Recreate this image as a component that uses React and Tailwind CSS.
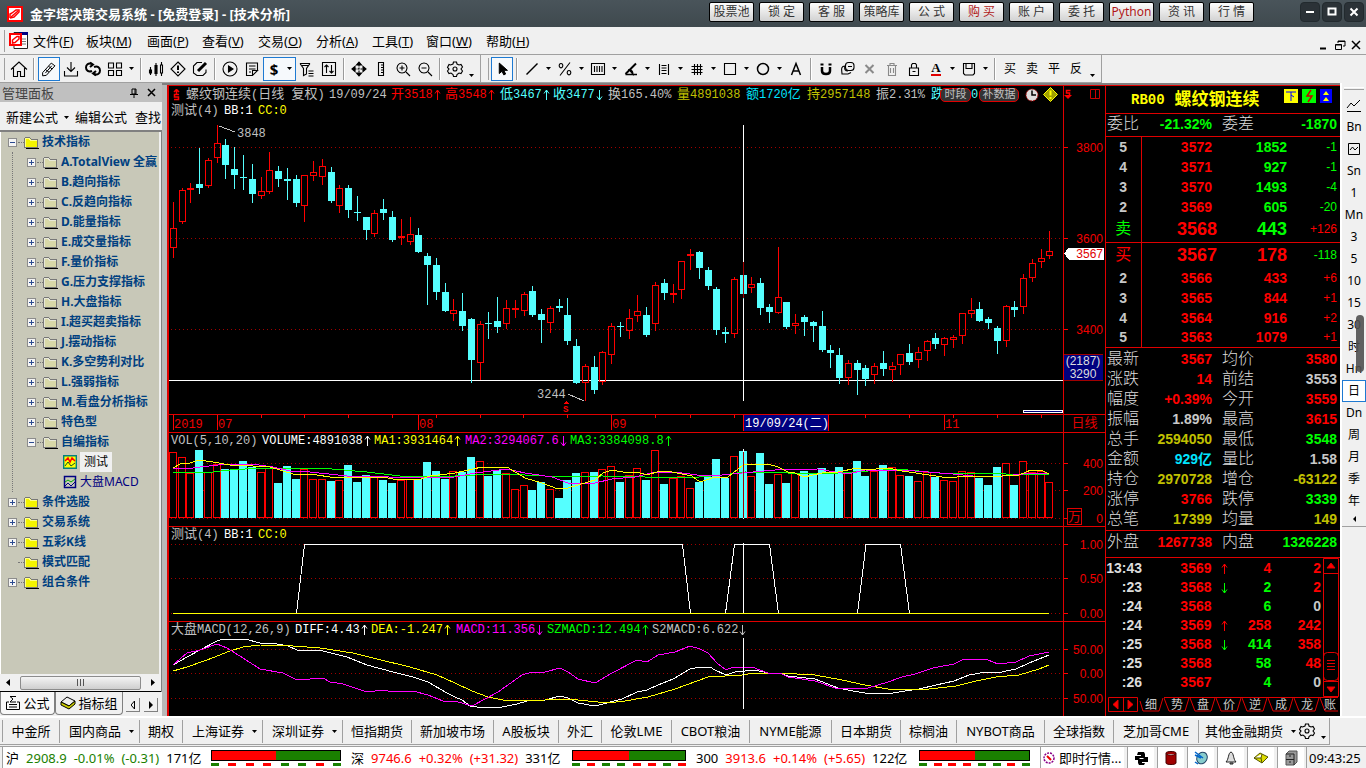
// ============================================================
// TRADING TERMINAL - K-LINE ANALYSIS SCREEN
// ============================================================

import React from 'react';

// ==================== CHART DATA ====================

// Each bar: up/down, high, body top, body bottom, low, volume top
const BARS = `
u 202 228 248 257 452|u 188 190 222 223 457|u 183 188 190 202 473|d 148 184 188 193 450|u 158 160 186 187 472
u 125 143 158 162 464|d 139 145 165 178 469|d 147 169 175 188 470|d 155 177 178 189 461|d 164 179 194 202 467
u 177 191 196 198 472|u 152 170 192 193 468|d 166 171 179 186 483|d 168 179 181 199 466|d 175 179 203 206 479
u 175 175 206 221 469|u 161 172 176 180 479|u 159 166 177 184 479|d 167 172 201 202 481|u 185 188 206 212 480
d 185 188 210 217 465|d 196 212 213 220 482|d 217 217 230 239 475|u 210 213 234 236 476|d 199 209 213 219 480
d 211 217 240 241 483|u 219 236 238 244 480|u 217 234 242 244 479|d 228 235 252 252 479|d 253 256 265 304 462
d 258 265 292 299 471|d 283 292 311 311 479|u 299 310 314 320 471|d 293 311 326 330 472|d 318 319 360 382 457
u 321 324 363 379 461|d 312 323 324 338 476|d 297 321 327 332 470|u 300 308 324 328 473|u 300 308 310 317 489
u 292 294 311 315 485|d 286 291 315 316 490|d 309 314 320 342 482|u 306 308 323 332 489|d 299 306 308 311 498
d 298 315 341 344 480|d 339 346 383 383 473|u 364 366 383 400 472|d 356 367 390 393 472|u 351 352 382 384 469
u 323 326 355 363 466|d 322 326 327 336 482|u 309 318 331 338 475|u 295 311 316 321 468|d 307 315 335 336 480
u 282 285 324 330 450|d 279 283 293 299 484|u 284 293 294 302 478|u 261 261 290 298 476|u 249 254 256 269 488
d 251 252 268 278 482|d 267 270 286 289 477|d 287 289 330 334 459|d 327 332 334 342 478|u 277 279 334 337 456
d 262 275 294 298 451|u 277 284 288 292 476|d 278 283 308 314 453|d 304 307 312 322 484|u 247 297 313 313 474
d 302 302 327 328 483|u 314 323 326 333 473|d 315 317 322 335 471|d 321 322 326 341 473|d 311 326 350 351 468
d 345 350 353 367 473|d 348 355 378 383 467|u 360 363 378 384 472|d 360 363 370 394 461|d 365 368 379 385 476
u 363 366 375 383 471|d 351 363 369 375 465|u 362 366 370 381 467|u 354 354 365 374 475|d 344 353 362 364 476
u 347 352 360 367 481|u 340 341 351 360 472|d 333 338 344 348 477|u 337 338 345 355 480|u 335 337 340 347 481
u 313 313 336 343 471|u 298 310 314 317 472|d 302 309 321 321 478|d 317 319 323 328 485|d 326 328 341 353 467
u 305 306 341 346 463|d 301 307 310 316 485|u 274 278 307 313 461|u 259 263 278 281 472|u 249 258 262 267 471
u 231 251 256 258 482`
  .trim()
  .split(/[|\n]/)
  .map((row, i) => {
    const [dir, ...n] = row.split(' ');
    const [high, top, bottom, low, vol] = n.map(Number);
    return { up: dir === 'u', high, top, bottom, low, vol, x: Math.floor(173.4 + 8.765 * i) };
  });

const MA_LINES = [
  { color: '#0f0', points: '173,472 213,472 230,470 260,468 320,468 367,472 400,476 455,476 495,474 525,475 565,477 602,476 688,478 722,475 745,472 788,473 838,473 898,469 939,473 973,473 1006,474 1049,474' },
  { color: '#f0f', points: '173,468 187,469 200,467 227,464 252,464 273,467 290,471 310,472 347,476 377,476 400,478 455,477 475,473 507,469 525,473 552,477 568,483 595,483 612,479 635,477 655,472 682,473 705,476 722,475 742,473 775,470 818,469 835,472 848,474 865,470 915,471 953,474 973,476 993,477 1033,473 1048,474' },
  { color: '#ff0', points: '173,468 182,463 190,463 199,460 213,462 230,465 253,466 267,466 283,471 293,474 317,475 330,477 383,477 393,479 418,480 430,476 447,474 455,473 482,467 507,467 525,478 542,483 558,489 568,488 578,485 595,480 603,473 612,470 628,473 637,472 647,475 660,471 672,472 692,476 700,482 715,477 728,477 743,465 768,464 778,467 788,472 795,473 804,477 822,473 838,472 857,468 865,470 888,468 902,471 929,475 949,478 966,476 986,477 1019,475 1031,470 1043,471 1049,474' },
];

const MACD_LINES = [
  { color: '#fff', points: '173,665 187,657 200,650 217,641 223,639 245,639 260,643 277,644 288,646 297,650 323,651 347,657 367,665 393,672 413,677 428,682 447,693 455,697 462,700 470,706 477,707 502,707 517,704 527,701 545,700 560,696 568,698 578,703 595,706 603,704 622,699 637,692 647,690 658,685 673,679 690,669 700,667 710,667 715,670 726,675 735,672 755,670 768,673 780,673 788,676 815,679 838,688 853,691 865,693 893,693 905,691 919,689 936,685 954,681 969,675 986,672 998,673 1006,671 1016,669 1029,663 1049,655' },
  { color: '#ff0', points: '173,671 187,667 207,660 230,651 243,647 260,645 293,646 320,648 353,653 377,659 410,667 437,675 455,683 472,691 488,697 508,701 545,700 562,699 578,700 608,703 625,701 648,697 675,689 708,677 742,675 755,673 778,673 815,675 842,680 865,685 888,689 912,690 929,689 956,686 976,681 996,677 1019,675 1039,669 1049,665' },
  { color: '#f0f', points: '173,665 187,653 200,650 217,644 227,648 243,658 260,669 283,673 297,680 323,678 330,682 343,684 367,692 383,690 393,692 413,691 428,695 443,701 455,701 472,706 485,699 498,692 522,675 532,672 545,672 560,668 568,672 578,679 595,683 612,673 637,660 647,662 658,655 675,652 690,646 700,649 708,653 717,663 726,670 733,667 752,667 768,673 780,673 788,677 815,681 838,689 868,688 888,682 902,677 915,674 933,668 954,664 964,659 974,659 988,660 998,664 1016,662 1029,656 1049,652' },
];

// ==================== SMALL HELPERS ====================

// Chart text: latin in 12px mono, Chinese runs one pixel larger
function Mix({ children, className = '' }) {
  const parts = String(children).split(/([\u4e00-\u9fff]+)/);
  return (
    <span className={`shrink-0 whitespace-pre ${className}`}>
      {parts.map((p, i) =>
        i % 2 ? <span key={i} className="text-[13px]">{p}</span> : p
      )}
    </span>
  );
}

function Arrow({ down }) {
  return (
    <svg className={`mx-px h-3 w-[7px] shrink-0 ${down ? 'rotate-180' : ''}`} viewBox="0 0 7 12" fill="none" stroke="currentColor">
      <path d="M3.500 1v10M1 4.500 3.500 1 6 4.500" />
    </svg>
  );
}

function Seg({ text, arrow, className }) {
  return (
    <span className={`flex shrink-0 items-center ${className}`}>
      <Mix>{text}</Mix>
      {arrow && <Arrow down={arrow === 'down'} />}
    </span>
  );
}

function GridLines({ rows }) {
  return rows.map((y) => (
    <line key={y} x1="171" x2="1063" y1={y + 0.5} y2={y + 0.5} stroke="#a00000" strokeDasharray="1 3" />
  ));
}

function Axis({ className, viewBox, ticks, children }) {
  return (
    <svg className={`block w-full overflow-visible ${className}`} viewBox={viewBox} preserveAspectRatio="none" shapeRendering="crispEdges">
      {ticks.map(([y, label]) => (
        <g key={y}>
          <path d={`M1064 ${y + 0.5}h4`} stroke="#f00" />
          <text x="1103" y={y + 5} textAnchor="end" fontSize="12" fill="#f00000">{label}</text>
        </g>
      ))}
      {children}
    </svg>
  );
}

// One chart pane: plot on the left, value axis on the right
function Pane({ plot, axis, className = '' }) {
  return (
    <div className={`flex ${className}`}>
      <div className="min-w-0 flex-1 overflow-hidden">{plot}</div>
      <div className="flex w-[42px] shrink-0 flex-col justify-end border-l border-[#e00000]">{axis}</div>
    </div>
  );
}

// ==================== TOOLBAR ICONS (22x22) ====================

const ICONS = {
  home: <path d="M3 11.500 11 4l8 7.500M5.500 10v8.500h4v-5h3v5h4V10" />,
  pen: <><path d="m4 15 9.500-10.500 4 3L8 18l-4 .5z" /><path d="m7 11.500 4 3M10.500 8l4 3M7 15.500l7-8" /></>,
  download: <path d="M11 4v9M7 9.500l4 4 4-4M4.500 13v5h13v-5" />,
  refresh: <g strokeWidth="2"><path d="M10 6c-4-1.500-6 1-6 3.500 0 3 2.500 5 6 3.500M12 16c4 1.500 6-1 6-3.500 0-3-2.500-5-6-3.500" /><path d="m8 4.500 3 2-3 2.500M14 13l-3 2.500 3 2" /></g>,
  grid: <path d="M4.500 5h5v5h-5zM12.500 5h5v5h-5zM4.500 12.500h5v5h-5zM12.500 12.500h5v5h-5z" />,
  candles: <><path d="M5.500 9v8M11 5v13M16.500 4v14" /><path d="M4.500 12h2v3h-2zM10 7.500h2v8h-2z" fill="currentColor" /><path d="M15.500 7h2v8h-2z" fill="#f0f0f0" /></>,
  warn: <><path d="m11 4 7 7-7 7-7-7z" /><path d="M11 7.500v4.500M11 13.500v1.500" strokeWidth="2" /></>,
  edit: <><path d="M13 4.500H8L4.500 8v7L8 17.500h6l3-3v-3" /><path d="m9 13 8-8" strokeWidth="3" /></>,
  play: <><circle cx="11" cy="11" r="7" /><path d="m9.500 8 4.500 3-4.500 3z" fill="currentColor" /></>,
  note: <path d="M16.500 12V5h-11v12.500h6l5-5h-5v5M8 8h6.500M8 11h6.500M8 14h2" />,
  filter: <path d="M4 5.500h10M4 5.500l3.500 5v7l3-1.500v-5.500L14 5.500M6 7.500h7M12.500 13h5M12.500 15.500h5M12.500 18h5" />,
  updown: <path d="M4.500 4.500h13v13h-13zM8.500 15V7M6.500 9l2-2 2 2M13.500 7v8M11.500 13l2 2 2-2" />,
  move: <><path d="M11 6.500v9M6.500 11h9" strokeDasharray="2 1" /><path d="m11 4 2.500 3h-5zM11 18l2.500-3h-5zM4 11l3-2.500v5zM18 11l-3-2.500v5z" fill="currentColor" /></>,
  ruler: <path d="M8.500 4.500h5v13h-5zM11 7h2.500M11 9.500h2.500M11 12h2.500M11 14.500h2.500" />,
  zoomIn: <path d="M10 5a5 5 0 1 0 .01 0M14 14l4 4M7.500 10h5M10 7.500v5" />,
  zoomOut: <path d="M10 5a5 5 0 1 0 .01 0M14 14l4 4M7.500 10h5" />,
  gear: <><path d="m9.500 4-.5 2-2.500 1-1.500-.5-1.500 3 1.500 1.500-1.500 2L5 15.500l2-.5 2 1.500.5 2h3l.5-2 2-1.500 2 .5 1.500-2.500-1.500-2L18.500 9 17 6.500l-2 .5-2-1-.5-2z" /><circle cx="11" cy="11" r="2" /></>,
  pointer: <path d="M8 4.500v11.500l3-2.500 2 4 2-1-2-4h4z" fill="currentColor" />,
  line: <path d="m5.500 16.500 11-11" strokeWidth="1.500" />,
  percent: <path d="M16 4.500 6 17.500M7 5.500a1.800 2.200 0 1 0 .01 0M15 12.500a1.800 2.200 0 1 0 .01 0" />,
  bars: <path d="M4.500 5.500h13v11h-13zM7.500 8v6M10 8v6M12.500 8v6M15 8v6" />,
  angle: <><path d="M5.500 16 16 5.500" strokeWidth="2" /><path d="M5.500 16.500H17" strokeWidth="1.500" /><path d="M9 11.500c3 0 4 2 4 5z" fill="currentColor" /></>,
  levels: <path d="M6.500 6v11M15.500 6v11M8.500 7.500h5M8.500 10h5M8.500 12.500h5M8.500 15.500h5" />,
  hash: <path d="M5.500 8.500h11M5.500 11.500h11M5.500 14.500h11M8.500 6v11M11.500 6v11M14.500 6v11" />,
  rect: <path d="M5.500 5.500h11v11h-11z" />,
  circle: <circle cx="11" cy="11" r="5.500" strokeWidth="1.500" />,
  letter: <path d="m6.500 17 4.500-11.500L15.500 17M8 13h6" strokeWidth="1.500" />,
  magnet: <><path d="M7 9v4c0 4 8 4 8 0V9" strokeWidth="2.500" /><path d="M5.500 6.500h3M13.500 6.500h3" strokeWidth="2" /></>,
  stack: <><rect x="8.500" y="4.500" width="8.500" height="8" rx="3" /><path d="M11 8.500h4M8 8c-5 0-3 5-3 8h6l3-1.500M8 8c-1 3 0 5 3 5" /></>,
  cross: <path d="m6.500 7 8 8M14.500 7l-8 8" stroke="#8a8a8a" strokeWidth="2" />,
  trash: <path d="M6 7.500h10M9 7V5.500h4V7M7.500 8v9.500h7V8M9.500 10v5M12.500 10v5" stroke="#8a8a8a" />,
  lock: <path d="M6.500 10h9v7.500h-9zM8.500 10V7l1-1.500h3l1 1.500v3M9.500 13.500h3" />,
  disk: <path d="M5.500 5.500h11v10l-1.500 1.500H7l-1.500-1.500zM8 5.500v5h6v-5M8.500 17h6" />,
};

function Icon({ name }) {
  return (
    <svg className="size-[22px]" viewBox="0 0 22 22" fill="none" stroke="currentColor" strokeWidth="1.100">
      {ICONS[name]}
    </svg>
  );
}

function Caret() {
  return (
    <svg className="h-[3px] w-[5px]" viewBox="0 0 5 3"><path d="M0 0h5L2.500 3z" fill="currentColor" /></svg>
  );
}

function Tool({ name, label, active, children }) {
  return (
    <button
      aria-label={label || name}
      className={`flex h-6 w-[22px] shrink-0 items-center justify-center ${active ? 'border border-[#1e7ad2] bg-[#f6f9fc]' : ''}`}
    >
      {name ? <Icon name={name} /> : children}
    </button>
  );
}

function Drop({ low }) {
  return (
    <button aria-label="更多" className={`flex h-6 w-[11px] shrink-0 justify-center ${low ? 'items-end pb-1' : 'items-center'}`}>
      <Caret />
    </button>
  );
}

const Sep = () => <div className="mx-[3px] h-[22px] w-0.5 shrink-0 border-l border-[#9a9a9a] border-r border-r-white" />;
const Grip = () => <div className="mx-[2px] h-[22px] w-[3px] shrink-0 border-r border-[#a0a0a0]" />;

// ==================== TOP BARS ====================

const QUICK = ['股票池', '锁 定', '客 服', '策略库', '公 式', '购 买', '账 户', '委 托', 'Python', '资 讯', '行 情'];
const WINDOW_CONTROLS = [
  ['最小化', 'M6 10h8'],
  ['最大化', 'M6.500 6.500h7v6h-7z'],
  ['关闭', 'm6.500 6.500 7 7M13.500 6.500l-7 7'],
];

function TitleBar() {
  return (
    <header className="flex h-[27px] items-center bg-linear-to-b from-[#49545a] to-[#3f494e] pr-0.5 pl-[7px] text-white">
      <svg className="size-4" viewBox="0 0 16 16">
        <rect width="16" height="16" fill="#f00" />
        <rect x="2" y="2" width="12" height="12" fill="#fff" />
        <path d="M3 12V8l2-1M3 12l4-1 5-5V4h-3L5 7" fill="none" stroke="#f00" strokeWidth="1.500" />
        <path d="m4 11 7-6" stroke="#f00" strokeWidth="1.500" />
      </svg>
      <h1 className="ml-[7px] text-[13px] font-bold leading-5">金字塔决策交易系统 - [免费登录] - [技术分析]</h1>
      <div className="ml-auto flex gap-[5px] pb-[3px] text-[#333]">
        {QUICK.map((t) => (
          <button
            key={t}
            className={`h-5 w-[45px] rounded-[2px] border border-black bg-linear-to-b from-[#fdfdfd] to-[#d2d2d2] text-[12px] leading-4 ${
              t === '购 买' || t === 'Python' ? 'text-[#b01818]' : ''
            }`}
          >
            {t}
          </button>
        ))}
      </div>
      <div className="ml-[46px] flex gap-0.5 pb-1">
        {WINDOW_CONTROLS.map(([label, d]) => (
          <button key={label} aria-label={label} className="size-5 rounded-[4px] border border-[#222a2e] bg-[#2b3237]">
            <svg className="size-[18px]" viewBox="1 1 18 18" fill="none" stroke="#fff" strokeWidth="2"><path d={d} /></svg>
          </button>
        ))}
      </div>
    </header>
  );
}

const MENUS = [
  ['文件', 'F', 'w-[53px]'], ['板块', 'M', 'w-[61px]'], ['画面', 'P', 'w-[55px]'], ['查看', 'V', 'w-14'],
  ['交易', 'O', 'w-[58px]'], ['分析', 'A', 'w-14'], ['工具', 'T', 'w-[54px]'], ['窗口', 'W', 'w-[60px]'], ['帮助', 'H', 'w-14'],
];

function MenuBar() {
  return (
    <nav className="flex h-[27px] items-center text-[13px]">
      <Grip />
      <svg className="mr-[5px] ml-0.5 h-[18px] w-[19px]" viewBox="0 0 19 18">
        <path d="M5 .5h13.500v16H5z" fill="#fff" stroke="#222" />
        <path d="M10 0h9v3h-9z" fill="#000080" />
        <path d="M13 7h4M13 9.500h4M13 12h4" stroke="#777" />
        <path d="M1 2h11v11H1z" fill="#fff" stroke="#f00" strokeWidth="2" />
        <path d="M3.500 11V8L8 4.500h2V7L6 10.500z" fill="none" stroke="#f00" strokeWidth="1.500" />
      </svg>
      {MENUS.map(([t, k, w]) => (
        <button key={k} className={`shrink-0 text-left whitespace-nowrap ${w}`}>
          {t}(<u>{k}</u>)
        </button>
      ))}
      <div className="mt-2 ml-auto flex gap-1 pr-1">
        <button aria-label="最小化子窗口"><svg className="size-3" viewBox="0 0 12 12"><path d="M2 8.500h6v2H2z" /></svg></button>
        <button aria-label="还原子窗口"><svg className="size-3" viewBox="0 0 12 12" fill="none" stroke="#000"><path d="M4 4V2h7v5H9M1.500 5.500h6v5h-6zM4 2.500h7M1.500 6h6" /></svg></button>
        <button aria-label="关闭子窗口"><svg className="size-3" viewBox="0 0 12 12" stroke="#000" strokeWidth="1.500"><path d="m2 2 8 8M10 2l-8 8" /></svg></button>
      </div>
    </nav>
  );
}

const DRAWING = ['line', 'percent', 'bars', 'angle', 'levels', 'hash', 'rect', 'circle'];

function ToolBar() {
  return (
    <div className="flex h-[29px] border-t border-[#a0a0a0]">
      <div className="flex items-center border-r border-b border-[#a0a0a0] pr-[3px]">
        <Grip />
        <div className="w-px" />
        <Tool name="home" label="首页" />
        <Sep />
        <Tool name="pen" active />
        <Tool name="download" /><Tool name="refresh" /><Tool name="grid" /><Drop />
        <Sep />
        <Tool name="candles" /><Tool name="warn" /><Tool name="edit" />
        <Sep />
        <Tool name="play" /><Tool name="note" />
        <div className="flex h-6 w-[33px] shrink-0 items-center border border-[#1e7ad2] bg-[#f6f9fc]">
          <button className="w-[21px] text-[15px] font-bold leading-5">$</button>
          <Drop />
        </div>
        <Tool name="filter" /><Tool name="updown" />
        <Sep />
        <Tool name="move" /><Tool name="ruler" /><Tool name="zoomIn" /><Tool name="zoomOut" />
        <Sep />
        <Tool name="gear" /><Drop low />
      </div>
      <div className="flex items-center border-r border-b border-[#a0a0a0] pl-[3px] pr-[3px]">
        <Grip />
        <Tool name="pointer" active />
        <Sep />
        {DRAWING.map((n) => (
          <React.Fragment key={n}><Tool name={n} /><Drop /></React.Fragment>
        ))}
        <Tool name="letter" />
        <Sep />
        <Tool name="magnet" /><Tool name="stack" /><Tool name="cross" /><Tool name="trash" /><Tool name="lock" />
        <Tool label="文字颜色">
          <span className="border-b-2 border-[#e00000] font-['Liberation_Serif',serif] text-[13px] font-bold leading-3">A</span>
        </Tool>
        <Drop />
        <Tool name="disk" /><Drop />
        <Sep />
        {['买', '卖', '平', '反'].map((t) => (
          <Tool key={t} label={t}><span className="text-[12px]">{t}</span></Tool>
        ))}
        <Drop low />
      </div>
    </div>
  );
}

// ==================== LEFT PANEL ====================

const INDICATORS = [
  'A.TotalView 全赢', 'B.趋向指标', 'C.反趋向指标', 'D.能量指标', 'E.成交量指标', 'F.量价指标', 'G.压力支撑指标',
  'H.大盘指标', 'I.超买超卖指标', 'J.摆动指标', 'K.多空势利对比', 'L.强弱指标', 'M.看盘分析指标', '特色型',
];

function Folder({ root }) {
  return (
    <svg className="h-[13px] w-[15px] shrink-0" viewBox="0 0 15 13" shapeRendering="crispEdges">
      <path d="M2 12.500h13V4" fill="none" stroke="#000" />
      <path d="M.5 11.500v-9l1-1h4l1 2h7v8z" fill={root ? '#f4f400' : '#d8d8a8'} stroke="#777" />
      <path d="M1.500 10.500v-8h4l1 2h6" fill="none" stroke={root ? '#ff8' : '#e8e8d8'} />
    </svg>
  );
}

function Expander({ sign }) {
  return (
    <span className="flex w-[26px] shrink-0 items-center">
      {sign ? (
        <svg className="size-[9px]" viewBox="0 0 9 9" shapeRendering="crispEdges">
          <rect x=".5" y=".5" width="8" height="8" fill="#f4f4f4" stroke="#8c8c8c" />
          <path d={sign === '+' ? 'M2 4.500h5M4.500 2v5' : 'M2 4.500h5'} stroke="#2a4a90" />
        </svg>
      ) : (
        <span className="w-[9px]" />
      )}
      <span className="ml-px w-1.5 border-t border-dotted border-[#777]" />
    </span>
  );
}

function Branch({ label, sign = '+', root }) {
  return (
    <div className={`flex h-5 items-center ${root ? 'pl-[7px]' : 'pl-[26px]'}`}>
      <Expander sign={sign} />
      <span className="-ml-[10px] flex items-center gap-[3px]">
        <Folder root={root} />
        <span className="whitespace-nowrap text-[12px] font-bold text-[#004080]">{label}</span>
      </span>
    </div>
  );
}

function ManagePanel() {
  return (
    <aside className="flex w-[162px] shrink-0 flex-col">
      <div className="flex h-[19px] items-center bg-[#c0c0c0] px-0.5 text-[13px] text-[#444]">
        <h2>管理面板</h2>
        <button aria-label="固定" className="ml-auto mr-2">
          <svg className="size-[10px]" viewBox="0 0 10 10" fill="none" stroke="#000"><path d="M3 1h4v5H3zM1 6.500h8M5 7v3M6 1v5" /></svg>
        </button>
        <button aria-label="关闭面板" className="mr-1">
          <svg className="size-[9px]" viewBox="0 0 9 9" stroke="#000" strokeWidth="1.500"><path d="m1 1 7 7M8 1 1 8" /></svg>
        </button>
      </div>
      <div className="flex h-[28px] items-center gap-1 whitespace-nowrap pl-1.5 pt-0.5 text-[13px]">
        <button className="flex shrink-0 items-center">新建公式<span className="ml-1.5"><Caret /></span></button>
        <button className="ml-0.5 shrink-0">编辑公式</button>
        <button className="ml-1 shrink-0">查找</button>
      </div>
      <div className="flex flex-1 flex-col border-t-2 border-r border-[#808080]">
        <div className="mr-0.5 flex-1 overflow-hidden border-l border-white bg-[#c8c8b8]">
          <Branch root label="技术指标" sign="-" />
          <div className="ml-[11px] border-l border-dotted border-[#777]">
            <div className="-ml-3">
              {INDICATORS.map((t) => <Branch key={t} label={t} />)}
              <Branch label="自编指标" sign="-" />
              <div className="flex h-5 items-center pl-[62px]">
                <svg className="size-[14px] shrink-0" viewBox="0 0 14 14">
                  <path d="M.7.7h12.600v12.600H.7z" fill="#ff0" stroke="#008080" strokeWidth="1.400" />
                  <path d="m2 6 3-3 2 4 2-4 3 3" fill="none" stroke="#f00" strokeWidth="1.500" />
                  <path d="m2 11 3-4 3 4 4-3" fill="none" stroke="#0a5a20" />
                </svg>
                <button className="ml-[3px] h-5 w-8 bg-[#f0f0f0] text-[12px]">测试</button>
              </div>
              <div className="flex h-5 items-center pl-[62px]">
                <svg className="size-[14px] shrink-0" viewBox="0 0 14 14" fill="none">
                  <path d="M1.500 1.500h11v11h-11z" stroke="#000080" strokeWidth="1.500" />
                  <path d="m2 7 3-2 3 2 4-3" stroke="#0a0" />
                  <path d="m2 11 3-3 3 3 4-4" stroke="#000080" />
                </svg>
                <button className="ml-[3px] whitespace-nowrap text-[12px] text-[#000080]">大盘MACD</button>
              </div>
            </div>
          </div>
          <Branch root label="条件选股" />
          <Branch root label="交易系统" />
          <Branch root label="五彩K线" />
          <Branch root label="模式匹配" sign="" />
          <Branch root label="组合条件" />
        </div>
        <div className="flex h-[18px] items-center justify-between border-b border-black px-1.5">
          <svg className="h-[7px] w-1" viewBox="0 0 4 7"><path d="M4 0v7L0 3.500z" /></svg>
          <div className="flex h-[14px] w-[121px] items-center justify-center gap-0.5 rounded-[2px] border border-[#8c8c8c] bg-linear-to-b from-[#f4f4f4] to-[#cfcfcf]">
            <i className="h-[7px] w-px bg-[#555]" /><i className="h-[7px] w-px bg-[#555]" /><i className="h-[7px] w-px bg-[#555]" />
          </div>
          <svg className="h-[7px] w-1" viewBox="0 0 4 7"><path d="M0 0v7l4-3.500z" /></svg>
        </div>
      </div>
      <div className="flex h-6 text-[13px]">
        <button className="flex h-[23px] w-[55px] items-center justify-center gap-0.5 rounded-b-[4px] border border-t-0 border-[#808080] bg-[#f8f8f8]">
          <svg className="h-[14px] w-4 shrink-0" viewBox="0 0 16 14" fill="none" stroke="#000"><path d="M4 6H1.500v7.500h13V6H12M4 8.500h8M4 11h8M5 .5h6M5 .5 8 3 5 6h6" /></svg>公式
        </button>
        <button className="flex h-[23px] w-[68px] items-center justify-center gap-0.5 whitespace-nowrap rounded-b-[4px] border border-t-0 border-[#808080]">
          <svg className="h-[14px] w-4 shrink-0" viewBox="0 0 16 14" stroke="#000"><path d="m1 6 6-5 8 4-6 5z" fill="#eee" /><path d="m1 6 8 4 6-5v3l-6 5-8-4z" fill="#cc0" /></svg>指标组
        </button>
        <div className="ml-[3px] mt-1.5 flex gap-1">
          <button aria-label="上一组" className="flex size-[14px] items-center justify-center border-r border-b border-[#808080]"><svg className="h-2 w-1" viewBox="0 0 4 8"><path d="M3.500 0v8L0 4z" fill="none" stroke="#000" /></svg></button>
          <button aria-label="下一组" className="flex size-[14px] items-center justify-center border-r border-b border-[#808080]"><svg className="h-2 w-1" viewBox="0 0 4 8"><path d="M0 0v8l4-4z" /></svg></button>
        </div>
      </div>
    </aside>
  );
}

// ==================== CHART AREA ====================

function PricePlot() {
  return (
    <svg className="block h-[295px] w-full" viewBox="169 119 894 295" preserveAspectRatio="none" shapeRendering="crispEdges">
      <GridLines rows={[147, 238, 329]} />
      <path d="M169 380.500H1063M743.500 125V401" stroke="#fff" />
      {BARS.map((b, i) =>
        b.up ? (
          <g key={i} stroke="#f00" fill="none">
            <path d={`M${b.x + 0.5} ${b.high}V${b.top}M${b.x + 0.5} ${b.bottom}V${b.low + 1}`} />
            <rect x={b.x - 2.5} y={b.top + 0.5} width="6" height={Math.max(b.bottom - b.top - 1, 1)} />
          </g>
        ) : (
          <g key={i} fill="#5ff">
            <rect x={b.x} y={b.high} width="1" height={b.low - b.high + 1} />
            <rect x={b.x - 3} y={b.top} width="7" height={b.bottom - b.top} />
          </g>
        )
      )}
      <path d="M743.500 262v36" stroke="#a00000" />
      <g stroke="#c0c0c0" fill="#c0c0c0">
        <path d="m219 126 16 6M568 394l16 7" />
        <g stroke="none" fontSize="12">
          <text x="237" y="137">3848</text>
          <text x="537" y="398">3244</text>
        </g>
      </g>
      <g fill="#f00">
        <path d="M564 404h5l-2.500-3z" />
        <text x="563" y="412" fontSize="9" fontWeight="bold">S</text>
      </g>
      <path d="M1023.500 410.500h39v2h-39z" fill="#000080" stroke="#fff" />
    </svg>
  );
}

function ChartArea() {
  return (
    <section className="min-w-0 flex-1 border-t border-l-2 border-[#e00000] bg-black font-['Liberation_Mono','Noto_Sans_CJK_SC',monospace] text-[12px] text-[#c0c0c0]">
      {/* ===== K-line ===== */}
      <Pane
        plot={
          <>
            <div className="flex h-[17px] items-center pl-1">
              <svg className="mr-1.5 h-3 w-[7px] shrink-0" viewBox="0 0 7 12" fill="none" stroke="#f00" strokeWidth="1.500"><path d="M6 5.500H1.500V8h4v2.500H1M3.500 1v4M1 3 3.500.5 6 3" /></svg>
              <Seg text="螺纹钢连续(日线 复权)" className="w-[143px]" />
              <Seg text="19/09/24" className="w-[62px]" />
              <Seg text="开3518" arrow="up" className="w-[54px] text-[#f00]" />
              <Seg text="高3548" arrow="up" className="w-[55px] text-[#f00]" />
              <Seg text="低3467" arrow="up" className="w-[53px] text-[#5ff]" />
              <Seg text="收3477" arrow="down" className="w-[55px] text-[#5ff]" />
              <Seg text="换165.40%" className="w-[69px]" />
              <Seg text="量4891038" className="w-[69px] text-[#c0c000]" />
              <Seg text="额1720亿" className="w-[61px] text-[#00e5ff]" />
              <Seg text="持2957148" className="w-[69px] text-[#c0c000]" />
              <Seg text="振2.31%" className="w-[55px]" />
              <Seg text="跌" className="w-[9px] text-[#5ff]" />
              <button className="z-10 h-[14px] w-[31px] shrink-0 rounded-[5px] border border-[#e00000] bg-[#333] text-[11px] leading-3">时段</button>
              <span className="w-2 shrink-0 text-[#5ff]">0</span>
              <button className="h-[14px] w-10 shrink-0 rounded-[5px] border border-[#e00000] bg-[#333] text-[11px] leading-3">补数据</button>
              <svg className="ml-1.5 size-[14px] shrink-0" viewBox="0 0 14 14"><circle cx="7" cy="7" r="6" fill="#ddd" stroke="#a00" strokeDasharray="2 1" /><path d="M7 2.500V7h4" fill="none" stroke="#000" strokeWidth="1.500" /></svg>
              <svg className="ml-1 size-[15px] shrink-0" viewBox="0 0 15 15"><path d="m7.500.5 7 7-7 7-7-7z" fill="#a0a000" stroke="#ff0" /><path d="M7.500 3.500v5M7.500 10v2" stroke="#ff0" strokeWidth="2" /></svg>
            </div>
            <div className="flex h-4 items-center pl-0.5">
              <Seg text="测试(4)" className="w-[53px]" />
              <Seg text="BB:1" className="w-[34px] text-white" />
              <Seg text="CC:0" className="text-[#ff0]" />
            </div>
            <PricePlot />
          </>
        }
        axis={
          <>
            <div className="mb-auto flex justify-between pt-[3px] pr-[5px]">
              <svg className="h-[10px] w-2" viewBox="0 0 8 10"><path d="M4 10 0 6h8z" fill="#f00" /><path d="M6.500 1.500h-4V4h3v3" fill="none" stroke="#f00" strokeWidth="1.500" /></svg>
              <svg className="h-[10px] w-[10px]" viewBox="0 0 10 10" fill="none" stroke="#c00"><path d="M.5.5h9v9h-9zM5.500 0v10" /></svg>
            </div>
            <Axis className="h-[295px] font-['Liberation_Sans',sans-serif]" viewBox="1064 119 41 295" ticks={[[147, '3800'], [238, '3600'], [329, '3400']]}>
              <path d="m1064 253.500 5-6h35v12h-35z" fill="#fff" />
              <text x="1103" y="258" textAnchor="end" fontSize="12" fill="#e00000">3567</text>
              <path d="M1064 354h39v27h-39z" fill="#000080" />
              <path d="M1064 354.500h39M1064 380.500h39" stroke="#a00000" />
              <text x="1083" y="365" textAnchor="middle" fontSize="12" fill="#ddd">(2187)</text>
              <text x="1083" y="378" textAnchor="middle" fontSize="12" fill="#ddd">3290</text>
            </Axis>
          </>
        }
      />
      {/* ===== Date axis ===== */}
      <Pane
        className="border-t border-[#e00000]"
        plot={
          <svg className="block h-[17px] w-full" viewBox="169 415 894 17" preserveAspectRatio="none" shapeRendering="crispEdges" fontSize="12" fill="#f00000">
            <path d="M173.500 415v15M217.500 415v15M418.500 415v15M611.500 415v15M944.500 415v15" stroke="#f00" />
            <path d="M261.500 415v3M304.500 415v3M348.500 415v3M392.500 415v3M436.500 415v3M480.500 415v3M523.500 415v3M567.500 415v3M655.500 415v3M690.500 415v3M734.500 415v3M865.500 415v3M909.500 415v3M953.500 415v3M997.500 415v3M1041.500 415v3" stroke="#f00" />
            <text x="174" y="428">2019</text>
            <text x="218" y="428">07</text>
            <text x="419" y="428">08</text>
            <text x="612" y="428">09</text>
            <text x="945" y="428">11</text>
            <path d="M743 415h85v16h-85z" fill="#000080" />
            <path d="M743.500 415v16M828.500 415v16" stroke="#f00" />
            <text x="745" y="427" fill="#fff">19/09/24(二)</text>
          </svg>
        }
        axis={<span className="text-center text-[13px] leading-[17px] text-[#e00000]">日线</span>}
      />
      {/* ===== Volume ===== */}
      <Pane
        className="border-t border-[#e00000]"
        plot={
          <>
            <div className="flex h-4 items-center pl-0.5">
              <Seg text="VOL(5,10,20)" className="w-[91px]" />
              <Seg text="VOLUME:4891038" arrow="up" className="w-28 text-white" />
              <Seg text="MA1:3931464" arrow="up" className="w-[91px] text-[#ff0]" />
              <Seg text="MA2:3294067.6" arrow="down" className="w-[105px] text-[#f0f]" />
              <Seg text="MA3:3384098.8" arrow="up" className="text-[#0f0]" />
            </div>
            <svg className="block h-[77px] w-full" viewBox="169 449 894 77" preserveAspectRatio="none" shapeRendering="crispEdges">
              <GridLines rows={[463, 490, 518]} />
              {BARS.map((b, i) =>
                b.up ? (
                  <rect key={i} x={b.x - 3.5} y={b.vol + 0.5} width="7" height={517 - b.vol} fill="#000" stroke="#f00" />
                ) : (
                  <rect key={i} x={b.x - 4} y={b.vol} width="8" height={518 - b.vol} fill="#5ff" />
                )
              )}
              {MA_LINES.map((l) => <polyline key={l.color} points={l.points} fill="none" stroke={l.color} />)}
              <path d="M743.500 449v70" stroke="#fff" />
              <path d="M743.500 452v66" stroke="#a00000" />
            </svg>
          </>
        }
        axis={
          <Axis className="h-[77px] font-['Liberation_Sans','Noto_Sans_CJK_SC',sans-serif]" viewBox="1064 449 41 77" ticks={[[463, '400'], [490, '200'], [518, '0']]}>
            <path d="M1067.500 508.500h14v16h-14z" fill="#000" stroke="#e00000" />
            <text x="1068" y="521" fontSize="13" fill="#e00000">万</text>
          </Axis>
        }
      />
      {/* ===== Test indicator ===== */}
      <Pane
        className="border-t border-[#e00000]"
        plot={
          <>
            <div className="flex h-4 items-center pl-0.5">
              <Seg text="测试(4)" className="w-[53px]" />
              <Seg text="BB:1" className="w-[34px] text-white" />
              <Seg text="CC:0" className="text-[#ff0]" />
            </div>
            <svg className="block h-[78px] w-full" viewBox="169 543 894 78" preserveAspectRatio="none" shapeRendering="crispEdges">
              <GridLines rows={[544, 578, 613]} />
              <path d="M296.500 613.500 304.500 544.500H682.500L690.500 613.500M725.500 613.500l9-69h35l9 69M857.500 613.500l8.500-69h34.500l9 69M743.500 543v71" fill="none" stroke="#fff" />
              <path d="M173 613.500H1049" stroke="#ff0" />
            </svg>
          </>
        }
        axis={<Axis className="h-[78px] font-['Liberation_Sans',sans-serif]" viewBox="1064 543 41 78" ticks={[[544, '1.00'], [578, '0.50'], [613, '0.00']]} />}
      />
      {/* ===== MACD ===== */}
      <Pane
        className="border-t border-[#e00000]"
        plot={
          <>
            <div className="flex h-4 items-center pl-0.5">
              <Seg text="大盘MACD(12,26,9)" className="w-[124px]" />
              <Seg text="DIFF:4.43" arrow="up" className="w-[76px] text-white" />
              <Seg text="DEA:-1.247" arrow="up" className="w-[85px] text-[#ff0]" />
              <Seg text="MACD:11.356" arrow="down" className="w-[91px] text-[#f0f]" />
              <Seg text="SZMACD:12.494" arrow="up" className="w-[105px] text-[#0f0]" />
              <Seg text="S2MACD:6.622" arrow="down" />
            </div>
            <svg className="block h-[78px] w-full" viewBox="169 638 894 78" preserveAspectRatio="none" shapeRendering="crispEdges">
              <GridLines rows={[649, 673, 698]} />
              {MACD_LINES.map((l) => <polyline key={l.color} points={l.points} fill="none" stroke={l.color} />)}
              <path d="M743.500 638v71" stroke="#fff" />
            </svg>
          </>
        }
        axis={<Axis className="h-[78px] font-['Liberation_Sans',sans-serif]" viewBox="1064 638 41 78" ticks={[[649, '50.00'], [673, '0.00'], [698, '50.00']]} />}
      />
    </section>
  );
}

// ==================== QUOTE PANEL ====================

const ASKS = [['5', 3572, 1852, '-1'], ['4', 3571, 927, '-1'], ['3', 3570, 1493, '-4'], ['2', 3569, 605, '-20'], ['卖', 3568, 443, '+126']];
const BIDS = [['买', 3567, 178, '-118'], ['2', 3566, 433, '+6'], ['3', 3565, 844, '+1'], ['4', 3564, 916, '+2'], ['5', 3563, 1079, '+1']];

const R = 'text-[#f00]';
const G = 'text-[#0f0]';
const Y = 'text-[#c0c000]';
const W = 'text-[#c8c8c8]';
const C = 'text-[#00e5ff]';

const STATS = [
  ['最新', '3567', R, '均价', '3580', R],
  ['涨跌', '14', R, '前结', '3553', W],
  ['幅度', '+0.39%', R, '今开', '3559', R],
  ['振幅', '1.89%', W, '最高', '3615', R],
  ['总手', '2594050', Y, '最低', '3548', G],
  ['金额', '929亿', C, '量比', '1.58', W],
  ['持仓', '2970728', Y, '增仓', '-63122', Y],
  ['涨停', '3766', R, '跌停', '3339', G],
  ['总笔', '17399', Y, '均量', '149', Y],
];

const TICKS = [
  ['13:43', 3569, 'up', 4, 2], [':23', 3568, 'down', 2, 2], [':24', 3568, '', 6, 0], [':24', 3569, 'up', 258, 242],
  [':25', 3568, 'down', 414, 358], [':25', 3568, '', 58, 48], [':26', 3567, '', 4, 0],
];

function Book({ rows, volColor }) {
  return (
    <table className="w-full table-fixed border-b border-[#e00000] text-right text-[14px] font-bold">
      <tbody>
        {rows.map(([n, price, vol, diff]) => {
          const big = n === '买' || n === '卖';
          return (
            <tr key={n} className={big ? 'h-[25px]' : 'h-5'}>
              <td className={`w-[35px] border-r border-[#e00000] p-0 text-center ${big ? `text-[16px] font-normal ${volColor}` : W}`}>{n}</td>
              <td className={`w-[76px] p-0 text-[#f00] ${big ? 'text-[18px]' : 'pr-[5px]'}`}>{price}</td>
              <td className={`w-[70px] p-0 ${volColor} ${big ? 'text-[18px]' : ''}`}>{vol}</td>
              <td className={`p-0 pr-[3px] text-[12px] font-normal ${diff[0] === '-' ? G : R}`}>{diff}</td>
            </tr>
          );
        })}
      </tbody>
    </table>
  );
}

function StatTable({ rows, className }) {
  return (
    <div className={`border-b border-[#e00000] ${className}`}>
      <table className="w-full table-fixed text-right text-[14px] font-bold">
        <tbody>
          {rows.map(([a, av, ac, b, bv, bc]) => (
            <tr key={a} className="h-5">
              <th className="w-[35px] whitespace-nowrap p-0 pl-px text-left text-[16px] font-light leading-5 text-[#dcdcdc]">{a}</th>
              <td className={`w-[71px] p-0 leading-5 ${ac}`}>{av}</td>
              <th className="w-11 whitespace-nowrap p-0 pl-[10px] text-left text-[16px] font-light leading-5 text-[#dcdcdc]">{b}</th>
              <td className={`p-0 pr-[3px] leading-5 ${bc}`}>{bv}</td>
            </tr>
          ))}
        </tbody>
      </table>
    </div>
  );
}

function QuotePanel() {
  return (
    <section className="flex w-[235px] shrink-0 flex-col border-t border-l border-[#e00000] bg-black font-['Liberation_Sans','Noto_Sans_CJK_SC',sans-serif]">
      <div className="flex h-7 items-center border-b border-[#e00000] pl-[25px] text-[#ff0]">
        <span className="font-['Liberation_Mono',monospace] text-[14px] font-bold">RB00</span>
        <h2 className="ml-[10px] text-[17px] font-bold leading-6">螺纹钢连续</h2>
        <div className="ml-auto flex gap-1 pr-2 pb-2">
          <button aria-label="下" className="size-[14px] bg-[#ff0]"><svg viewBox="0 0 14 14" fill="none" stroke="#00f"><path d="M2 3h10M7 3v9M7 6l3 2" /></svg></button>
          <button aria-label="闪电" className="size-[14px] bg-[#0f0]"><svg viewBox="0 0 14 14" fill="none" stroke="#c00" strokeWidth="1.500"><path d="M9 1 5 7h5l-4 6" /></svg></button>
          <button aria-label="上移" className="h-[14px] w-3 bg-[#00f]"><svg viewBox="0 0 12 14" fill="#ff0"><path d="M6 2 9 6H3zM6 8l3 4H3z" /></svg></button>
        </div>
      </div>
      <StatTable className="h-[23px]" rows={[['委比', '-21.32%', G, '委差', '-1870', G]]} />
      <Book rows={ASKS} volColor="text-[#0f0]" />
      <Book rows={BIDS} volColor="text-[#f00]" />
      <StatTable className="h-[183px] pt-px" rows={STATS} />
      <StatTable className="h-[27px] pt-px" rows={[['外盘', '1267738', R, '内盘', '1326228', G]]} />
      <div className="flex items-start">
        <table className="mt-px flex-1 table-fixed text-right text-[14px] font-bold">
          <tbody>
            {TICKS.map(([time, price, dir, vol, diff], i) => (
              <tr key={i} className="h-[19px]">
                <td className="w-9 p-0 leading-[19px] text-[#dcdcdc]">{time}</td>
                <td className="w-[70px] p-0 leading-[19px] text-[#f00]">{price}</td>
                <td className={`w-6 p-0 pl-2 ${dir === 'up' ? R : G}`}>{dir && <Arrow down={dir === 'down'} />}</td>
                <td className={`w-9 p-0 leading-[19px] ${vol === 258 || i === 0 ? R : G}`}>{vol}</td>
                <td className={`w-[50px] p-0 leading-[19px] ${diff ? R : W}`}>{diff}</td>
              </tr>
            ))}
          </tbody>
        </table>
        <svg className="mr-px ml-[2px] h-[139px] w-4" viewBox="0 0 16 139" fill="none" stroke="#e00000">
          <path d="M.5.5h15v138H.500zM0 15.500h16M0 123.500h16" />
          <path d="M8 5l4 5H4zM8 134l4-5H4z" fill="#f00" />
          <rect x=".5" y="94.500" width="15" height="28" rx="4" />
          <path d="M4 102.500h8M4 105.500h8M4 108.500h8M4 111.500h8" />
        </svg>
      </div>
      <div className="flex flex-1 pl-0.5">
        <svg className="h-[15px] w-[30px] shrink-0" viewBox="0 0 30 15" fill="none" stroke="#e00000"><path d="M.5.5h29v14H.500zM15.500 0v15" /><path d="M10 3v9L5 7.500zM20 3v9l5-4.500z" fill="#f00" /></svg>
        {['细', '势', '盘', '价', '逆', '成', '龙', '账'].map((t, i) => (
          <button key={t} className={`relative h-4 shrink-0 overflow-hidden text-[12px] leading-4 text-[#c8c8c8] ${i === 7 ? 'w-[18px] pl-1 text-left' : 'w-[26px]'}`}>
            <svg className="absolute top-0 left-0 h-4 w-[26px]" viewBox="0 0 26 16" fill="none" stroke="#e00000">
              <path d={i === 0 ? 'M2 4l3 10h16l4-13' : 'M0 1l5 13h16l4-13M0 .500h26'} />
            </svg>
            <span className="relative">{t}</span>
          </button>
        ))}
      </div>
    </section>
  );
}

// ==================== RIGHT PERIOD BAR ====================

const PERIODS = ['1', 'Mn', '3', '5', '10', '15', '30', '时', 'Hn', '日', 'Dn', '周', '月', '季', '年'];

function PeriodBar() {
  return (
    <aside className="relative w-[26px] shrink-0 border-l-2 border-white text-[12px]">
      <div className="flex flex-col items-stretch border-b border-[#a0a0a0] pt-1">
        <div className="mx-0.5 mb-1 h-[3px] border-t border-b border-[#a0a0a0] border-t-white" />
        <button aria-label="走势" className="flex h-[22px] items-center justify-center">
          <svg className="size-4" viewBox="0 0 16 16" fill="none" stroke="#000"><path d="m1 11 4-5 3 3 6-6M1 14.500h14" /></svg>
        </button>
        <button className="h-[22px]">Bn</button>
        <button aria-label="图表" className="flex h-[22px] items-center justify-center">
          <svg className="size-3" viewBox="0 0 12 12" fill="none" stroke="#000"><path d="M.5.5h11v11H.500zM2 7l2.500-3L7 7l3-3" /></svg>
        </button>
        <button className="h-[22px]">Sn</button>
        {PERIODS.map((p) => (
          <button key={p} className={`h-[22px] ${p === '日' ? 'border border-[#1e7ad2] bg-white' : ''}`}>{p}</button>
        ))}
        <button aria-label="收起" className="flex h-[14px] items-center justify-center"><svg className="h-1.5 w-[3px]" viewBox="0 0 3 6"><path d="M3 0v6L0 3z" /></svg></button>
      </div>
      <div className="absolute top-[232px] right-0.5 h-[57px] w-2 rounded-full bg-[#505050]/90" />
    </aside>
  );
}

// ==================== BOTTOM BARS ====================

const MARKETS = [
  ['中金所', 'w-[57px]'], ['国内商品', 'w-20', true], ['期权', 'w-[43px]'], ['上海证券', 'w-20', true], ['深圳证券', 'w-20', true],
  ['恒指期货', 'w-[69px]'], ['新加坡市场', 'w-[82px]'], ['A股板块', 'w-[65px]'], ['外汇', 'w-[43px]'], ['伦敦LME', 'w-[70px]'],
  ['CBOT粮油', 'w-[78px]'], ['NYME能源', 'w-[82px]'], ['日本期货', 'w-[69px]'], ['棕榈油', 'w-14'], ['NYBOT商品', 'w-[88px]'],
  ['全球指数', 'w-[69px]'], ['芝加哥CME', 'w-[85px]'],
];

function MarketBar() {
  return (
    <nav className="flex h-[30px] items-start border-t-2 border-white text-[13px]">
      <div className="flex h-[27px] items-center border-r border-b border-[#a0a0a0]">
        <div className="h-[22px] w-[3px] shrink-0 border-r border-[#a0a0a0]" />
        {MARKETS.map(([t, w, drop]) => (
          <button key={t} className={`flex h-[23px] shrink-0 items-center justify-center whitespace-nowrap border-r border-[#a0a0a0] ${drop ? 'gap-2 pl-1' : ''} ${w}`}>
            {t}
            {drop && <Caret />}
          </button>
        ))}
        <button className="flex w-[97px] shrink-0 items-center justify-end gap-2 whitespace-nowrap">其他金融期货<Caret /></button>
        <Tool name="gear" label="设置" />
        <Drop low />
      </div>
    </nav>
  );
}

const INDEXES = [
  { name: '沪', vals: ['2908.9', '-0.01%', '(-0.31)'], amt: '171亿', color: 'text-[#1a8000]', box: 'w-[205px]', bar: 'w-[130px]', marks: 'grrrggrg' },
  { name: '深', vals: ['9746.6', '+0.32%', '(+31.32)'], amt: '331亿', color: 'text-[#f00]', box: 'w-[221px]', bar: 'w-[114px]', marks: 'grggrrgr' },
  { name: '300', vals: ['3913.6', '+0.14%', '(+5.65)'], amt: '122亿', color: 'text-[#f00]', box: 'w-[223px]', bar: 'w-[111px]', marks: 'grrrggrg' },
];

const TRAY = [
  <g key="py"><path d="M5 2h6l1 2v4H7l-2 2H2V6h6V5H4z" /><path d="M11 15H6l-1-2V9h5l2-2h3v5H9v1h3z" /></g>,
  <path key="db" d="M3 3c0-2 10-2 10 0v10c0 2-10 2-10 0zM3 4c2 1.500 8 1.500 10 0" fill="#a00000" stroke="#400" />,
  <g key="dish"><ellipse cx="9" cy="8" rx="5" ry="6" fill="#8cc" stroke="#246" transform="rotate(30 9 8)" /><path d="m2 2 8 6M2 12l3 2M2 5l6 3" stroke="#06c" strokeWidth="1.500" /></g>,
  <path key="bell" d="M8 2c-3 1-2 7-5 10h10C10 9 11 3 8 2zM7 13h3v1H7z" fill="#ddd" stroke="#222" />,
  <path key="mail" d="m1 8 6-5 8 4-6 6zM1 8l7 0 1-4M8 8l1 5" fill="#dd0" stroke="#550" />,
  <g key="cab"><path d="m3 4 3-3h8v11l-3 3H3z" fill="#999" stroke="#555" /><path d="M3 4h8v11M3 9.500h8M6 6h2M6 12h2" fill="none" stroke="#222" /></g>,
];

function StatusBar() {
  return (
    <footer className="flex h-[22px] items-stretch border-t border-[#a0a0a0] text-[13px]">
      <div className="ml-0.5 flex shrink-0 items-center border-l border-[#a0a0a0] bg-white pl-[3px]">
        {INDEXES.map((x) => (
          <div key={x.name} className="mr-[10px] flex items-center">
            <div className={`flex gap-[7px] whitespace-nowrap ${x.box}`}>
              <span>{x.name}</span>
              {x.vals.map((v) => <span key={v} className={x.color}>{v}</span>)}
              <span>{x.amt}</span>
            </div>
            <div className={x.bar}>
              <div className="flex h-[11px] border border-black">
                <div className="flex-1 bg-[#f00]" />
                <div className="flex-1 bg-[#1a8000]" />
              </div>
              <div className="mt-0.5 flex justify-between">
                {x.marks.split('').map((m, i) => (
                  <i key={i} className={`h-[3px] w-2 ${m === 'g' ? 'bg-[#1a8000]' : 'bg-[#f00]'}`} />
                ))}
              </div>
            </div>
          </div>
        ))}
      </div>
      <div className="flex w-[84px] shrink-0 items-center gap-1 whitespace-nowrap border-l border-[#a0a0a0] bg-white pl-0.5">
        <svg className="size-3" viewBox="0 0 12 12" fill="none"><circle cx="6" cy="6" r="5" stroke="#808" strokeWidth="1.500" strokeDasharray="2 1" /><path d="m4 4 4 4" stroke="#e00" strokeWidth="2" /></svg>
        即时行情...
      </div>
      {TRAY.map((icon) => (
        <button key={icon.key} className="ml-[3px] flex w-[27px] shrink-0 items-center justify-center border-l border-[#a0a0a0] bg-white">
          <svg className="size-4" viewBox="0 0 16 16">{icon}</svg>
        </button>
      ))}
      <time className="ml-[2px] flex flex-1 items-center whitespace-nowrap border-l border-[#a0a0a0] pl-[2px]">09:43:25</time>
    </footer>
  );
}

// ==================== PAGE ====================

export default function App() {
  return (
    <div className="flex min-h-screen flex-col overflow-hidden bg-[#f0f0f0] font-['Noto_Sans','Noto_Sans_CJK_SC',sans-serif] leading-4 text-black">
      <TitleBar />
      <MenuBar />
      <ToolBar />
      <main className="flex flex-1">
        <ManagePanel />
        <div className="flex min-w-0 flex-1 border-t-2 border-[#808080] pl-[5px] shadow-[inset_5px_0_0_#b8b8b8]">
          <ChartArea />
          <QuotePanel />
        </div>
        <PeriodBar />
      </main>
      <MarketBar />
      <StatusBar />
    </div>
  );
}
